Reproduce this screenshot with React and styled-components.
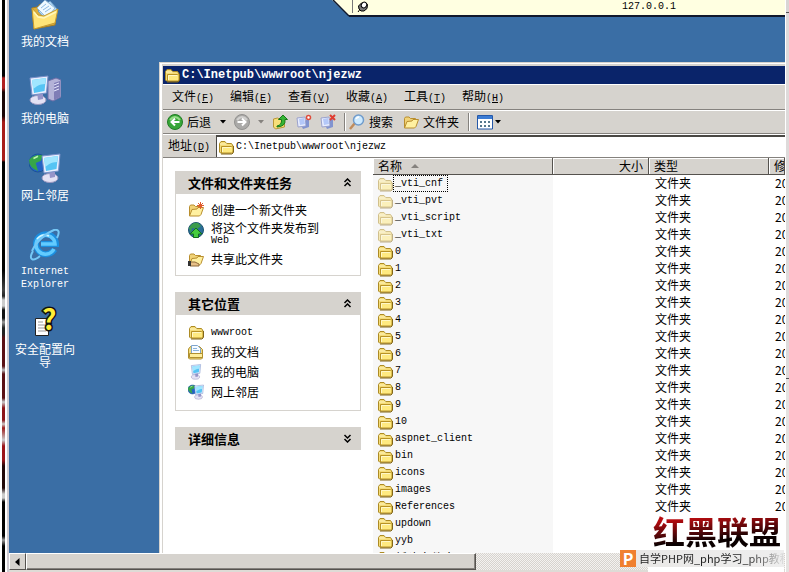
import React from "react";
import styled, { createGlobalStyle, css } from "styled-components";

const CJK = '"Noto Sans CJK SC", sans-serif';
const MONO = '"Liberation Mono", "Noto Sans CJK SC", monospace';
const FACE = "#d6d3ce";

const GlobalStyle = createGlobalStyle`
  * { box-sizing: border-box; }
  body { margin: 0; background: #fff; font: 12px/12px ${CJK}; color: #000; }
  button, input { font: inherit; color: inherit; border: 0; padding: 0; margin: 0; background: none; }
  a { color: inherit; text-decoration: none; }
  svg { display: block; flex: none; }
`;

/* ---------- frame ---------- */

const Page = styled.div`
  position: relative;
  display: grid;
  grid-template-columns: 9px minmax(0, 1fr) 4px;
  height: 100vh;
  overflow: hidden;
`;

const LeftEdge = styled.div`
  display: grid;
  grid-template-columns: 2px 3px 2px 2px;
`;

const Photo = styled.div`
  background: linear-gradient(#000 76px, #b02020 78px 88px, #1a0505 92px 116px, #a81c18 122px 160px,
    #000 162px 270px, #444 290px, #222 296px, #ccc 300px 306px, #111 310px 318px, #999 322px, #222 328px 334px,
    #5a1014 338px 366px, #bbb 370px, #5a1014 374px 398px, #ccc 402px, #8c1418 408px 420px, #ccc 424px,
    #9c1c1c 428px, #ccc 440px, #9c1418 446px 460px, #200808 466px 488px, #ccc 494px 498px, #000 502px 536px,
    #999 540px, #000 546px);
`;

const Grey = styled.div`
  background: #cfcbd2;
`;

const RightEdge = styled.div`
  border-left: 1px solid #fff;
  background: linear-gradient(#d9d5d4 12px, #555 12px 13px, #dedada 13px 378px, #555 378px 379px, #e5e2e0 379px);
`;

const Session = styled.div`
  display: grid;
  grid-template-rows: minmax(0, 1fr) 17px 2px;
  min-width: 0;
  background: #dedbd6;
`;

const Desktop = styled.main`
  position: relative;
  overflow: hidden;
  background: #3a6ea5;
`;

/* ---------- desktop shortcuts ---------- */

const Shortcuts = styled.nav`
  display: grid;
  width: 72px;
  grid-auto-rows: 77px;
  margin-top: -2px;
`;

const Shortcut = styled.a`
  display: flex;
  flex-direction: column;
  align-items: center;
  gap: 4px;
  padding: 0 4px;
  color: #fff;
  line-height: 13px;
  text-align: center;
`;

const Latin = styled.span`
  font: ${(p) => (p.$bold ? "bold 12px" : "10px")}/13px ${MONO};
`;

/* ---------- connection bar ---------- */

const Connection = styled.header`
  position: absolute;
  top: 0;
  right: 0;
  left: 323px;
  display: flex;
  height: 17px;
`;

const ConnectionBody = styled.div`
  flex: 1;
  display: flex;
  align-items: flex-start;
  padding-left: 3px;
  background: #ffffe1;
  border-bottom: 2px solid #10182c;
`;

const Pin = styled.button`
  height: 13px;
  padding-left: 4px;
  border-left: 1px solid #777;
`;

const Address = styled.span`
  margin: 0 109px 0 auto;
  font: 10px/13px ${MONO};
`;

/* ---------- explorer window ---------- */

const Window = styled.section`
  position: absolute;
  inset: 62px 0 0 150px;
  display: flex;
  flex-direction: column;
  background: ${FACE};
  border: solid #d6d3ce;
  border-width: 1px 0 0 1px;
  box-shadow: inset 2px 1px #fff;
  padding: 3px 0 0 3px;
`;

const TitleBar = styled.h1`
  display: flex;
  align-items: center;
  gap: 2px;
  height: 18px;
  margin: 0;
  padding-left: 1px;
  background: #0a246a;
  color: #fff;
`;

const Bar = styled.div`
  display: flex;
  align-items: center;
  height: ${(p) => p.$h}px;
  border-top: 1px solid #fff;
  border-bottom: 1px solid #85827e;
  padding-left: ${(p) => p.$pad}px;
`;

const MenuItem = styled.button`
  width: 58px;
  white-space: nowrap;
`;

const Tool = styled.button`
  display: flex;
  align-items: center;
  gap: ${(p) => p.$gap || 4}px;
  margin-right: ${(p) => p.$after || 8}px;
  white-space: nowrap;
`;

const Divider = styled.div`
  width: 2px;
  height: 18px;
  margin-right: ${(p) => p.$after}px;
  border-left: 1px solid #85827e;
  border-right: 1px solid #fff;
`;

const AddressLabel = styled.label`
  flex: none;
  width: 48px;
`;

const AddressField = styled.div`
  flex: 1;
  align-self: stretch;
  display: flex;
  align-items: center;
  gap: 2px;
  padding-left: 1px;
  background: #fff;
  border: solid #4a4844;
  border-width: 2px 0 0 1px;
`;

const AddressInput = styled.input`
  flex: 1;
  min-width: 0;
  height: 16px;
  font: 10px/16px ${MONO};
  outline: 0;
`;

const Body = styled.div`
  flex: 1;
  min-height: 0;
  display: grid;
  grid-template-columns: 210px minmax(0, 1fr);
  background: #fff;
  overflow: hidden;
`;

/* ---------- task pane ---------- */

const TaskPane = styled.aside`
  display: flex;
  flex-direction: column;
  gap: 16px;
  padding: 13px 12px;
`;

const PanelHead = styled.button`
  display: flex;
  align-items: center;
  justify-content: space-between;
  width: 100%;
  height: 23px;
  padding: 0 9px 0 13px;
  background: ${FACE};
  font: bold 13px/16px ${CJK};
`;

const PanelList = styled.ul`
  display: flex;
  flex-direction: column;
  gap: 4px;
  margin: 0;
  padding: ${(p) => (p.$compact ? "9px 12px 10px" : "8px 12px")};
  border: 1px solid ${FACE};
  border-top: 0;
  list-style: none;
`;

const TaskLink = styled.a`
  display: flex;
  align-items: flex-start;
  gap: 7px;
`;

const TaskText = styled.span`
  display: flex;
  flex-direction: column;
  justify-content: center;
  min-height: 16px;
`;

/* ---------- file list ---------- */

const Files = styled.table`
  width: 100%;
  table-layout: fixed;
  border-collapse: separate;
  border-spacing: 0;
  align-self: start;
`;

const Th = styled.th`
  height: 17px;
  padding: 0 5px;
  background: ${FACE};
  border: solid #55524e;
  border-width: 0 1px 1px 0;
  box-shadow: inset 1px 1px #fff;
  font-weight: normal;
  text-align: ${(p) => (p.$right ? "right" : "left")};
  white-space: nowrap;
  overflow: hidden;
`;

const SortLabel = styled.span`
  display: flex;
  align-items: center;
  gap: 9px;
`;

const Td = styled.td`
  height: 17px;
  padding: 0 0 0 ${(p) => (p.$name ? 4 : 6)}px;
  line-height: 15px;
  vertical-align: top;
  white-space: nowrap;
  overflow: hidden;
  ${(p) => p.$name && css`background: #f7f7f7;`}
`;

const FileLink = styled.a`
  display: flex;
  align-items: center;
  height: 17px;
  svg { opacity: ${(p) => (p.$hidden ? 0.5 : 1)}; }
`;

const FileName = styled.span`
  padding: 1px 4px 1px 1px;
  border: 1px dotted ${(p) => (p.$focus ? "#000" : "transparent")};
  font: ${(p) => (p.$cjk ? "12px" : "10px")}/13px ${(p) => (p.$cjk ? CJK : MONO)};
`;

/* ---------- scroll bar ---------- */

const ScrollBar = styled.div`
  display: flex;
  background: repeating-conic-gradient(#d6d3ce 0 25%, #f4f2f0 0 50%) 0 0 / 2px 2px;
`;

const raised = css`
  background: ${FACE};
  border: 1px solid #fff;
  border-right-color: #55524e;
  border-bottom-color: #55524e;
`;

const ScrollButton = styled.button`
  && {
    ${raised}
    display: grid;
    place-items: center;
    width: 17px;
  }
`;

const Thumb = styled.div`
  ${raised}
  width: 58%;
  box-shadow: inset -1px -1px #85827e;
`;

/* ---------- site mark ---------- */

const Mark = styled.footer`
  position: absolute;
  right: 5px;
  bottom: 0;
  width: 164px;
  display: flex;
  flex-direction: column;
`;

const Brand = styled.strong`
  align-self: flex-end;
  width: 136px;
  height: 38px;
  padding-left: 5px;
  background: #fff;
  font: bold 32px/36px ${CJK};
  white-space: nowrap;
`;

const BrandInk = styled.span`
  background: linear-gradient(175deg, #b80c10 25%, #500608 52%, #0a0000 68%);
  background-clip: text;
  color: transparent;
`;

const Credit = styled.a`
  display: flex;
  height: 17px;
  background: linear-gradient(90deg, #e9e7e5, #eee);
  overflow: hidden;
`;

const CreditIcon = styled.b`
  flex: none;
  width: 16px;
  background: #f08030;
  color: #fff;
  font: bold 16px/17px ${CJK};
  text-align: center;
`;

const CreditText = styled.span`
  padding-left: 3px;
  font: 11px/17px ${CJK};
  white-space: nowrap;
  background: linear-gradient(90deg, #222 110px, #aaa 138px, #ddd 148px);
  background-clip: text;
  color: transparent;
`;

const Base = styled.div`
  align-self: flex-end;
  width: 136px;
  height: 5px;
  background: #fff;
`;

/* ---------- icons ---------- */

const Folder = ({ size = 16 }) => (
  <svg width={size} height={size} viewBox="0 0 16 16">
    <path d="M1.5 13V4.5L3 2.5h4l1.5 2h5l1 1.5v7l-1 1h-11z" fill="#f5dc78" stroke="#ad8b24" />
    <path d="M2 5h6.5" stroke="#fff6c2" />
    <path d="M3.500 7.500h10l1.500-1v6.500l-1.500 1h-10z" fill="#ffea80" stroke="#b89224" />
    <path d="M4.500 8.500h8.500M4.500 8.500v4.500" stroke="#fff8c8" fill="none" />
    <path d="M15.500 7v6.500l-1.500 1.500h-11" stroke="#826718" fill="none" />
  </svg>
);

const OpenFolder = ({ mark }) => (
  <svg width="16" height="16" viewBox="0 0 16 16">
    <path d="M1.500 14V4.500l1-1.500h3.500l1.500 1.500h5v3" fill="#f1d377" stroke="#b98e2e" />
    <path d="M1.500 14l2.500-6.500 5-.5 1-1.500h5.500l-2.500 7-1.500 1.500z" fill="#fff0a0" stroke="#b98e2e" />
    {mark === "new" && <path d="M12.500 0v7M9 3.500h7M10 1l5 5M15 1l-5 5" stroke="#e05a2c" strokeWidth="1" />}
    {mark === "share" && (
      <g>
        <path d="M2 11h5l4 2v2H2z" fill="#e7c088" stroke="#8f6b38" />
        <path d="M0 10h3v5H0z" fill="#333" />
      </g>
    )}
  </svg>
);

const Monitor = ({ x = 0, y = 0 }) => (
  <g transform={`translate(${x} ${y})`}>
    <ellipse cx="9" cy="25" rx="8" ry="4.500" fill="#e4e2f4" stroke="#9a98c0" />
    <path d="M8 17l6-1v8l-5 1z" fill="#9694c8" />
    <path d="M1 3L19 1l-1.500 17L3 20z" fill="#e8efff" stroke="#7890c8" />
    <path d="M3 5l14-2-1.500 13L5 18z" fill="#56c4f4" />
    <path d="M3 5l14-2-1 6C10 9 7 12 4 14z" fill="#a0e6ff" />
  </g>
);

const Globe = ({ x, y, r }) => (
  <g>
    <circle cx={x} cy={y} r={r} fill="#2463c4" stroke="#1a5398" />
    <path
      d={`M${x - r} ${y - r / 3}Q${x - r / 2} ${y - r} ${x + r / 2} ${y - r * 0.85}L${x + r / 3} ${y - r / 4}L${x - r / 4} ${y}L${x} ${y + r * 0.9}Q${x - r} ${y + r / 2} ${x - r} ${y - r / 3}z`}
      fill="#36a648"
    />
    <path d={`M${x - r / 2} ${y - r / 2}l${r / 2} ${-r / 4}`} stroke="#c2f4b4" strokeWidth="1.500" />
  </g>
);

const Computer = ({ size = 32, tower = true }) => (
  <svg width={size} height={size} viewBox={tower ? "0 0 32 32" : "-1 0 22 31"}>
    {tower && (
      <g>
        <path d="M19 6l8-3 5 2v17l-8 4-5-2z" fill="#b4b3d8" stroke="#706fa8" />
        <path d="M25 8l6-2v16l-6 3z" fill="#7f7db6" />
        <path d="M25 10l5-2M25 13l5-2M25 16l5-2" stroke="#e8e8ff" />
      </g>
    )}
    <Monitor />
  </svg>
);

const Network = ({ size = 32 }) => (
  <svg width={size} height={size} viewBox="0 0 32 32">
    <Globe x={9} y={11} r={9} />
    <Monitor x={12} y={1} />
  </svg>
);

const Documents = () => (
  <svg width="32" height="32" viewBox="0 0 32 32">
    <path d="M3 10l5-1 3-3 17 5-2 16-21 4z" fill="#dcae3c" stroke="#a87e20" />
    <path d="M9 13L21 3l7 8-9 13z" fill="#b6dcfa" stroke="#6d9ec8" />
    <path d="M8 10l8-8 10 8-8 10z" fill="#eef9ff" stroke="#92b9d8" />
    <path d="M12 10l5-4M14 12l6-4M16 14l6-4" stroke="#8cbae4" />
    <path d="M3 10l6 7 6 1 14-7-3 14-21 6z" fill="#ffe478" stroke="#c49a30" />
    <path d="M5 14l4 5 6 1 12-6" stroke="#fff6bc" fill="none" strokeWidth="1.500" />
  </svg>
);

const Explorer = () => (
  <svg width="32" height="32" viewBox="0 0 32 32">
    <path d="M25.500 20.500A10 10 0 1 1 27 15H12" fill="none" stroke="#1b8fe0" strokeWidth="6" />
    <path d="M25 20A9.500 9.500 0 1 1 26 15H12" fill="none" stroke="#62cbff" strokeWidth="3.500" />
    <path d="M8 10q5-6 12-3" fill="none" stroke="#d3f5ff" strokeWidth="1.500" />
    <path d="M4 22C-1 31 4 33 11 27M3 22C7 13 17 4 25 1c5-1 6 2 3 8" fill="none" stroke="#75c8f6" strokeWidth="2" />
  </svg>
);

const QText = styled.text`
  font: bold 28px ${CJK};
`;

const Wizard = () => (
  <svg width="32" height="32" viewBox="0 0 32 32">
    <path d="M6.500 12.500h13v17h-13z" fill="#fff" stroke="#222" />
    <path d="M9 16h5M9 19h8M9 22h8M9 25h8" stroke="#999" />
    <QText x="13" y="24" fill="#ffee38" stroke="#111" strokeWidth="3" paintOrder="stroke">?</QText>
  </svg>
);

const PinIcon = () => (
  <svg width="11" height="12" viewBox="0 0 11 12">
    <path d="M1 11l3-4" stroke="#000" />
    <path d="M1.500 5l3-3 4-.5 2 2-.5 4-3 2.500h-3l-2-2z" fill="#777" stroke="#000" />
    <ellipse cx="7" cy="4" rx="2.500" ry="3" fill="#fff" stroke="#000" transform="rotate(35 7 4)" />
  </svg>
);

const RoundArrow = ({ off }) => (
  <svg width="16" height="16" viewBox="0 0 16 16">
    <circle cx="8" cy="8" r="7.500" fill={off ? "#aaa9a7" : "#38a638"} stroke={off ? "#92918f" : "#217c25"} />
    <path d="M3 6q5-6 10 0" fill="none" stroke={off ? "#d2d1cf" : "#95dc88"} strokeWidth="2" />
    <path d={off ? "M3.500 8h8M8 4.500L11.500 8 8 11.500" : "M12.500 8h-8M8 4.500L4.500 8 8 11.500"} fill="none" stroke="#fff" strokeWidth="2" />
  </svg>
);

const Caret = ({ off }) => (
  <svg width="6" height="4" viewBox="0 0 6 4">
    <path d="M0 0h6L3 3.500z" fill={off ? "#85827e" : "#000"} />
  </svg>
);

const UpFolder = () => (
  <svg width="16" height="16" viewBox="0 0 16 16">
    <path d="M1.500 5l4-1 2 1 5-1v9l-9 2-2-2z" fill="#f7df79" stroke="#b99739" />
    <path d="M5 12q5-1 4.500-6.500H6.500L11 1l4.500 4.500H13q1 7-8 7.500z" fill="#35b535" stroke="#187818" />
  </svg>
);

const Server = ({ cross }) => (
  <svg width="16" height="16" viewBox="0 0 16 16">
    <path d="M1 4l8-1 1 9-8 1z" fill="#e8edff" stroke="#9ba2cc" />
    <path d="M3 5l5-1 1 6-5 1z" fill="#b4c8f8" />
    <path d="M10 6l3-1v8l-6 2-1-2 4-1z" fill="#8294d0" />
    {cross ? (
      <path d="M10 1l5 5M15 1l-5 5" stroke="#df3c30" strokeWidth="2" />
    ) : (
      <circle cx="12.500" cy="3.500" r="2" fill="#fff" stroke="#df4c3c" strokeWidth="1.500" />
    )}
  </svg>
);

const Magnifier = () => (
  <svg width="16" height="16" viewBox="0 0 16 16">
    <path d="M1 15l5-6" stroke="#c08c5c" strokeWidth="2.500" />
    <circle cx="9.500" cy="6" r="5" fill="#cdeaff" stroke="#709ccc" strokeWidth="1.500" />
    <path d="M7 5q1-2 3-2" stroke="#fff" strokeWidth="1.500" fill="none" />
  </svg>
);

const Views = () => (
  <svg width="16" height="15" viewBox="0 0 16 15">
    <path d="M.5.5h15v13.500H.5z" fill="#fff" stroke="#2458a8" />
    <path d="M1 1h14v3H1z" fill="#3c7cd4" />
    <path d="M3 6h2v2H3zM7 6h2v2H7zM11 6h2v2h-2zM3 10h2v2H3zM7 10h2v2H7zM11 10h2v2h-2z" fill="#56788c" />
  </svg>
);

const Chevrons = ({ down }) => (
  <svg width="9" height="9" viewBox="0 0 9 9">
    <path
      d={down ? "M1.500 1l3 3 3-3M1.500 5l3 3 3-3" : "M1.500 4l3-3 3 3M1.500 8l3-3 3 3"}
      fill="none"
      stroke="#000"
      strokeWidth="1.500"
    />
  </svg>
);

const Publish = () => (
  <svg width="16" height="16" viewBox="0 0 16 16">
    <circle cx="8" cy="8" r="7.500" fill="#2a6e98" stroke="#1e5470" />
    <path d="M1 6Q4 0 10 1l3 3-4 3-5-1-1 5z" fill="#3c9c4c" />
    <path d="M8 6l6 6h-3.500v3.500h-5V12H2z" fill="#46cc3e" stroke="#146c20" />
  </svg>
);

const DocFolder = () => (
  <svg width="16" height="16" viewBox="0 0 16 16">
    <path d="M.5 14V5l2-2.500h9l3 3V14l-1 1h-12z" fill="#f3dc7c" stroke="#b0902f" />
    <path d="M3.500 10V1.500h6l3 3V10z" fill="#f6fbff" stroke="#7ea4cc" />
    <path d="M5 4.500h4M5 6.500h6" stroke="#8ab4dc" />
    <path d="M1.500 9.500h13v4h-13z" fill="#ffee9c" stroke="#b0902f" />
  </svg>
);

/* ---------- data ---------- */

const shortcuts = [
  ["我的文档", Documents],
  ["我的电脑", Computer],
  ["网上邻居", Network],
  ["Internet Explorer", Explorer, true],
  ["安全配置向导", Wizard],
];

const menus = [
  ["文件", "F"],
  ["编辑", "E"],
  ["查看", "V"],
  ["收藏", "A"],
  ["工具", "T"],
  ["帮助", "H"],
];

const TYPE = "文件夹";

const files = [
  ["_vti_cnf", TYPE, "20"],
  ["_vti_pvt", TYPE, "20"],
  ["_vti_script", TYPE, "20"],
  ["_vti_txt", TYPE, "20"],
  ["0", TYPE, "20"],
  ["1", TYPE, "20"],
  ["2", TYPE, "20"],
  ["3", TYPE, "20"],
  ["4", TYPE, "20"],
  ["5", TYPE, "20"],
  ["6", TYPE, "20"],
  ["7", TYPE, "20"],
  ["8", TYPE, "20"],
  ["9", TYPE, "20"],
  ["10", TYPE, "20"],
  ["aspnet_client", TYPE, "20"],
  ["bin", TYPE, "20"],
  ["icons", TYPE, "20"],
  ["images", TYPE, "20"],
  ["References", TYPE, "20"],
  ["updown"],
  ["yyb"],
  ["新建文件夹"],
];

const PATH = "C:\\Inetpub\\wwwroot\\njezwz";

const Hotkey = ({ k }) => (
  <Latin>
    (<u>{k}</u>)
  </Latin>
);

const Task = ({ icon, children }) => (
  <li>
    <TaskLink href="#">
      {icon}
      <TaskText>{children}</TaskText>
    </TaskLink>
  </li>
);

const Panel = ({ title, closed, compact, children }) => (
  <section>
    <PanelHead aria-expanded={!closed}>
      {title}
      <Chevrons down={closed} />
    </PanelHead>
    {!closed && <PanelList $compact={compact}>{children}</PanelList>}
  </section>
);

export default function App() {
  return (
    <Page>
      <GlobalStyle />
      <LeftEdge>
        <div />
        <Photo />
        <div />
        <Grey />
      </LeftEdge>

      <Session>
        <Desktop>
          <Shortcuts>
            {shortcuts.map(([label, Icon, latin]) => (
              <Shortcut href="#" key={label}>
                <Icon />
                {latin ? <Latin>{label}</Latin> : <span>{label}</span>}
              </Shortcut>
            ))}
          </Shortcuts>

          <Connection>
            <svg width="17" height="17" viewBox="0 0 17 17">
              <path d="M0 0h17v16z" fill="#ffffe1" />
              <path d="M1 0l16 16" stroke="#10182c" strokeWidth="1.500" />
            </svg>
            <ConnectionBody>
              <Pin aria-label="Pin">
                <PinIcon />
              </Pin>
              <Address>127.0.0.1</Address>
            </ConnectionBody>
          </Connection>

          <Window>
            <TitleBar>
              <Folder />
              <Latin $bold>{PATH}</Latin>
            </TitleBar>
            <Bar $h={26} $pad={1}>
              {menus.map(([label, key]) => (
                <MenuItem key={key}>
                  {label}
                  <Hotkey k={key} />
                </MenuItem>
              ))}
            </Bar>
            <Bar $h={24} $pad={4}>
              <Tool $after={9}><RoundArrow />后退</Tool>
              <Tool aria-label="后退选项"><Caret /></Tool>
              <Tool aria-label="前进"><RoundArrow off /></Tool>
              <Tool aria-label="前进选项"><Caret off /></Tool>
              <Tool aria-label="向上"><UpFolder /></Tool>
              <Tool aria-label="映射"><Server /></Tool>
              <Tool aria-label="断开"><Server cross /></Tool>
              <Divider $after={3} />
              <Tool $after={10}><Magnifier />搜索</Tool>
              <Tool $after={9}><OpenFolder />文件夹</Tool>
              <Divider $after={7} />
              <Tool $gap={2} aria-label="查看方式"><Views /><Caret /></Tool>
            </Bar>
            <Bar $h={24} $pad={5}>
              <AddressLabel htmlFor="path">
                地址<Hotkey k="D" />
              </AddressLabel>
              <AddressField>
                <Folder />
                <AddressInput id="path" defaultValue={PATH} />
              </AddressField>
            </Bar>

            <Body>
              <TaskPane>
                <Panel title="文件和文件夹任务">
                  <Task icon={<OpenFolder mark="new" />}>创建一个新文件夹</Task>
                  <Task icon={<Publish />}>
                    将这个文件夹发布到<Latin>Web</Latin>
                  </Task>
                  <Task icon={<OpenFolder mark="share" />}>共享此文件夹</Task>
                </Panel>
                <Panel title="其它位置" compact>
                  <Task icon={<Folder />}><Latin>wwwroot</Latin></Task>
                  <Task icon={<DocFolder />}>我的文档</Task>
                  <Task icon={<Computer size={16} tower={false} />}>我的电脑</Task>
                  <Task icon={<Network size={16} />}>网上邻居</Task>
                </Panel>
                <Panel title="详细信息" closed />
              </TaskPane>

              <Files>
                <colgroup>
                  <col width="180" />
                  <col width="96" />
                  <col width="120" />
                  <col />
                </colgroup>
                <thead>
                  <tr>
                    <Th>
                      <SortLabel>
                        名称
                        <svg width="8" height="4" viewBox="0 0 8 4">
                          <path d="M4 0l4 4H0z" fill="#85827e" />
                        </svg>
                      </SortLabel>
                    </Th>
                    <Th $right>大小</Th>
                    <Th>类型</Th>
                    <Th>修</Th>
                  </tr>
                </thead>
                <tbody>
                  {files.map(([name, type, date], i) => (
                    <tr key={name}>
                      <Td $name>
                        <FileLink href="#" $hidden={i < 4}>
                          <Folder />
                          <FileName $focus={i === 0} $cjk={!type && !date && i === files.length - 1}>{name}</FileName>
                        </FileLink>
                      </Td>
                      <Td />
                      <Td>{type}</Td>
                      <Td>{date}</Td>
                    </tr>
                  ))}
                </tbody>
              </Files>
            </Body>
          </Window>
        </Desktop>

        <ScrollBar>
          <ScrollButton aria-label="向左滚动">
            <svg width="5" height="8" viewBox="0 0 5 8">
              <path d="M4.500 0v8L0 4z" />
            </svg>
          </ScrollButton>
          <Thumb />
        </ScrollBar>
      </Session>

      <RightEdge />

      <Mark>
        <Brand><BrandInk>红黑联盟</BrandInk></Brand>
        <Credit href="#">
          <CreditIcon>P</CreditIcon>
          <CreditText>自学PHP网_php学习_php教程</CreditText>
        </Credit>
        <Base />
      </Mark>
    </Page>
  );
}
